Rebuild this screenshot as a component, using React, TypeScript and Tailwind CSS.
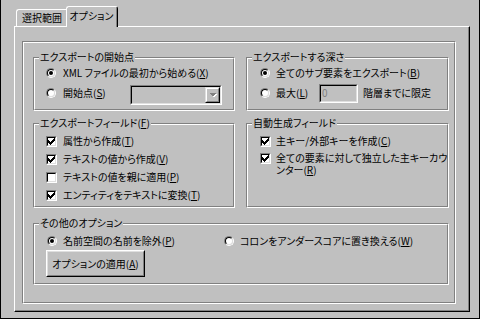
import React from "react";

type Kids = { children?: React.ReactNode };

// underlined access key inside "( )"
function Key({ children }: Kids) {
  return <span className="underline underline-offset-[1px]">{children}</span>;
}

function Etched({ className, children }: Kids & { className?: string }) {
  return (
    <div className={`border border-t-[#808080] border-l-[#808080] border-r-white border-b-white ${className ?? ""}`}>
      <div className="h-full border border-t-white border-l-white border-r-[#808080] border-b-[#808080]">{children}</div>
    </div>
  );
}

function Group({ title, className, children }: Kids & { title: React.ReactNode; className?: string }) {
  return (
    <Etched className={className}>
      <div className="-mt-[8px] ml-[4px] w-fit bg-[#c0c0c0] px-[1px]">{title}</div>
      {children}
    </Etched>
  );
}

function Radio({ checked }: { checked?: boolean }) {
  return (
    <span className="flex h-[10px] w-[10px] shrink-0 rounded-full border border-t-[#808080] border-l-[#808080] border-r-white border-b-white">
      <span className="flex h-full w-full items-center justify-center rounded-full border border-t-black border-l-black border-r-[#dfdfdf] border-b-[#dfdfdf] bg-white">
        {checked && <span className="h-[4px] w-[4px] rounded-full bg-black" />}
      </span>
    </span>
  );
}

function Check({ checked }: { checked?: boolean }) {
  return (
    <span className="flex h-[11px] w-[11px] shrink-0 border border-t-[#808080] border-l-[#808080] border-r-white border-b-white">
      <span className="flex h-full w-full items-center justify-center border border-t-black border-l-black border-r-[#dfdfdf] border-b-[#dfdfdf] bg-white">
        {checked && (
          <svg width="7" height="7" viewBox="0 0 7 7" shapeRendering="crispEdges">
            <rect x="0" y="2" width="1" height="3" fill="#000" />
            <rect x="1" y="3" width="1" height="3" fill="#000" />
            <rect x="2" y="4" width="1" height="3" fill="#000" />
            <rect x="3" y="3" width="1" height="3" fill="#000" />
            <rect x="4" y="2" width="1" height="3" fill="#000" />
            <rect x="5" y="1" width="1" height="3" fill="#000" />
            <rect x="6" y="0" width="1" height="3" fill="#000" />
          </svg>
        )}
      </span>
    </span>
  );
}

function Sunken({ className, children }: Kids & { className?: string }) {
  return (
    <div className={`border border-t-[#808080] border-l-[#808080] border-r-white border-b-white ${className ?? ""}`}>
      <div className="flex h-full border border-t-black border-l-black border-r-[#dfdfdf] border-b-[#dfdfdf] bg-[#c0c0c0]">{children}</div>
    </div>
  );
}

export default function App() {
  return (
    <div className="h-[319px] w-[480px] border-x border-b border-black bg-[#c0c0c0] pl-[13px] pt-[6px] font-['Noto_Sans_CJK_JP','Noto_Sans',sans-serif] text-[10px] leading-[12px] text-black [font-feature-settings:'palt']">
      {/* tabs */}
      <div className="flex h-[21px] items-end pl-[2px]">
        <div className="mb-px h-[17px] w-[52px] rounded-tl-[3px] border-l border-t border-white pl-[5px] pt-[2px]">選択範囲</div>
        <div className="relative z-10 -ml-[2px] h-[21px] w-[52px] rounded-t-[3px] border border-b-0 border-t-white border-l-white border-r-black bg-[#c0c0c0]">
          <div className="flex h-full justify-center border-r border-[#808080] pt-[3px]">オプション</div>
        </div>
      </div>

      {/* panel */}
      <div className="-mt-px h-[286px] w-[456px] border border-t-white border-l-white border-r-black border-b-black">
        <div className="h-full border-r border-b border-[#808080] pl-[7px] pt-[14px]">
          <Etched className="h-[263px] w-[434px]">
            <div className="pl-[9px] pt-[14px]">
              <div className="flex gap-[11px]">
                <Group title="エクスポートの開始点" className="h-[54px] w-[202px]">
                  <div className="pl-[11px]">
                    <div className="mt-[2px] flex h-[16px] items-center gap-[7px]">
                      <Radio checked />
                      <span>XML ファイルの最初から始める(<Key>X</Key>)</span>
                    </div>
                    <div className="mt-[2px] flex">
                      <div className="flex h-[20px] items-center gap-[7px]">
                        <Radio />
                        <span>開始点(<Key>S</Key>)</span>
                      </div>
                      <Sunken className="ml-auto mr-[11px] mt-[2px] h-[20px] w-[92px]">
                        <div className="ml-auto flex h-full w-[15px] border border-t-[#dfdfdf] border-l-[#dfdfdf] border-r-black border-b-black">
                          <div className="flex flex-1 items-center justify-center border border-t-white border-l-white border-r-[#808080] border-b-[#808080]">
                            <svg width="8" height="5" viewBox="0 0 8 5" shapeRendering="crispEdges">
                              <path d="M1 1h7L4.5 4.5z" fill="#fff" />
                              <path d="M0 0h7L3.5 3.5z" fill="#808080" />
                            </svg>
                          </div>
                        </div>
                      </Sunken>
                    </div>
                  </div>
                </Group>

                <Group title="エクスポートする深さ" className="h-[54px] w-[203px]">
                  <div className="pl-[12px]">
                    <div className="mt-[2px] flex h-[16px] items-center gap-[6px]">
                      <Radio checked />
                      <span>全てのサブ要素をエクスポート(<Key>B</Key>)</span>
                    </div>
                    <div className="mt-[2px] flex items-center">
                      <div className="flex h-[20px] w-[59px] items-center gap-[6px]">
                        <Radio />
                        <span>最大(<Key>L</Key>)</span>
                      </div>
                      <Sunken className="h-[19px] w-[39px]">
                        <span className="pl-px pt-[1px] text-[#808080]">0</span>
                      </Sunken>
                      <span className="ml-[5px]">階層までに限定</span>
                    </div>
                  </div>
                </Group>
              </div>

              <div className="mt-[12px] flex gap-[11px]">
                <Group title={<>エクスポートフィールド(<Key>F</Key>)</>} className="h-[85px] w-[202px]">
                  <div className="mt-[3px] pl-[11px]">
                    <div className="flex h-[18px] items-center gap-[6px]">
                      <Check checked />
                      <span>属性から作成(<Key>T</Key>)</span>
                    </div>
                    <div className="flex h-[18px] items-center gap-[6px]">
                      <Check checked />
                      <span>テキストの値から作成(<Key>V</Key>)</span>
                    </div>
                    <div className="flex h-[18px] items-center gap-[6px]">
                      <Check />
                      <span>テキストの値を親に適用(<Key>P</Key>)</span>
                    </div>
                    <div className="flex h-[18px] items-center gap-[6px]">
                      <Check checked />
                      <span>エンティティをテキストに変換(<Key>T</Key>)</span>
                    </div>
                  </div>
                </Group>

                <Group title="自動生成フィールド" className="h-[85px] w-[203px]">
                  <div className="mt-[3px] pl-[12px]">
                    <div className="flex h-[18px] items-center gap-[5px]">
                      <Check checked />
                      <span>主キー/外部キーを作成(<Key>C</Key>)</span>
                    </div>
                    <div className="flex items-start gap-[5px] pt-[3px]">
                      <Check checked />
                      <div className="-mt-[1px] whitespace-nowrap">
                        <div>全ての要素に対して独立した主キーカウ</div>
                        <div>ンター(<Key>R</Key>)</div>
                      </div>
                    </div>
                  </div>
                </Group>
              </div>

              <Group title="その他のオプション" className="mt-[15px] h-[62px] w-[416px]">
                <div className="mt-[4px] flex h-[16px] items-center pl-[12px]">
                  <div className="flex w-[177px] items-center gap-[6px]">
                    <Radio checked />
                    <span>名前空間の名前を除外(<Key>P</Key>)</span>
                  </div>
                  <div className="flex items-center gap-[6px]">
                    <Radio />
                    <span>コロンをアンダースコアに置き換える(<Key>W</Key>)</span>
                  </div>
                </div>
                <div className="ml-[11px] mt-[1px] h-[27px] w-[99px] border border-t-white border-l-white border-r-black border-b-black">
                  <div className="flex h-full items-center justify-center border border-t-[#dfdfdf] border-l-[#dfdfdf] border-r-[#808080] border-b-[#808080]">
                    オプションの適用(<Key>A</Key>)
                  </div>
                </div>
              </Group>
            </div>
          </Etched>
        </div>
      </div>
    </div>
  );
}
